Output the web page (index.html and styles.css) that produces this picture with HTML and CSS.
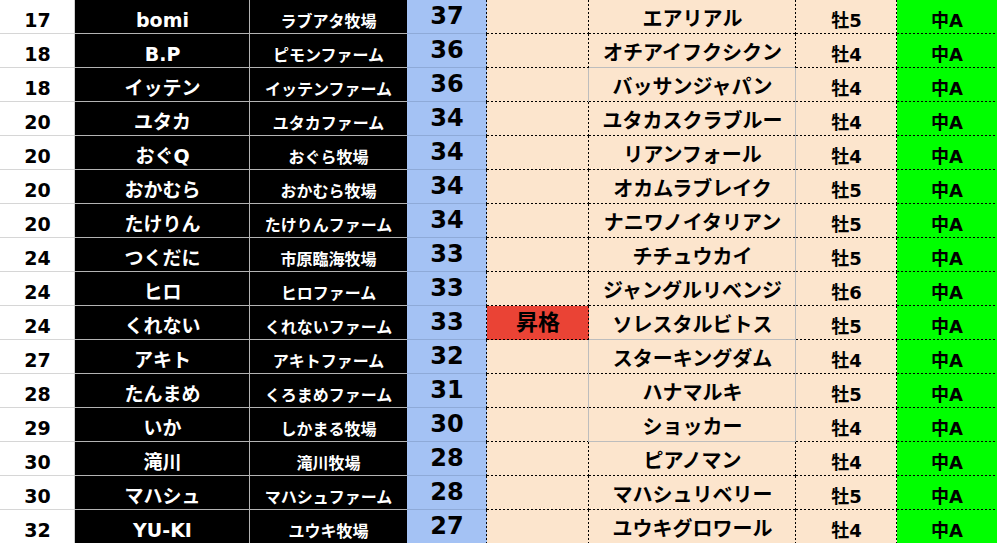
FILE: index.html
```html
<!DOCTYPE html>
<html lang="ja">
<head>
<meta charset="utf-8">
<link rel="stylesheet" href="styles.css">
</head>
<body>
<div class="sheet">
  <div class="row"><div class="c rank">17</div><div class="c name">bomi</div><div class="c farm">ラブアタ牧場</div><div class="c pts">37</div><div class="c note"></div><div class="c horse">エアリアル</div><div class="c sex">牡5</div><div class="c cls">中A</div></div>
  <div class="row"><div class="c rank">18</div><div class="c name">B.P</div><div class="c farm">ピモンファーム</div><div class="c pts">36</div><div class="c note"></div><div class="c horse hb-solid">オチアイフクシクン</div><div class="c sex">牡4</div><div class="c cls">中A</div></div>
  <div class="row"><div class="c rank">18</div><div class="c name">イッテン</div><div class="c farm">イッテンファーム</div><div class="c pts">36</div><div class="c note nr-solid"></div><div class="c horse hr-solid">バッサンジャパン</div><div class="c sex">牡4</div><div class="c cls">中A</div></div>
  <div class="row"><div class="c rank">20</div><div class="c name">ユタカ</div><div class="c farm">ユタカファーム</div><div class="c pts">34</div><div class="c note"></div><div class="c horse hr-solid">ユタカスクラブルー</div><div class="c sex">牡4</div><div class="c cls">中A</div></div>
  <div class="row"><div class="c rank">20</div><div class="c name">おぐQ</div><div class="c farm">おぐら牧場</div><div class="c pts">34</div><div class="c note"></div><div class="c horse hr-solid">リアンフォール</div><div class="c sex">牡4</div><div class="c cls">中A</div></div>
  <div class="row"><div class="c rank">20</div><div class="c name">おかむら</div><div class="c farm">おかむら牧場</div><div class="c pts">34</div><div class="c note"></div><div class="c horse hr-solid">オカムラブレイク</div><div class="c sex">牡5</div><div class="c cls">中A</div></div>
  <div class="row"><div class="c rank">20</div><div class="c name">たけりん</div><div class="c farm">たけりんファーム</div><div class="c pts">34</div><div class="c note"></div><div class="c horse hr-solid">ナニワノイタリアン</div><div class="c sex">牡5</div><div class="c cls">中A</div></div>
  <div class="row"><div class="c rank">24</div><div class="c name">つくだに</div><div class="c farm">市原臨海牧場</div><div class="c pts">33</div><div class="c note"></div><div class="c horse hr-solid">チチュウカイ</div><div class="c sex">牡5</div><div class="c cls">中A</div></div>
  <div class="row"><div class="c rank">24</div><div class="c name">ヒロ</div><div class="c farm">ヒロファーム</div><div class="c pts">33</div><div class="c note"></div><div class="c horse hr-solid">ジャングルリベンジ</div><div class="c sex">牡6</div><div class="c cls">中A</div></div>
  <div class="row"><div class="c rank">24</div><div class="c name">くれない</div><div class="c farm">くれないファーム</div><div class="c pts">33</div><div class="c note promo">昇格</div><div class="c horse hr-solid hb-solid">ソレスタルビトス</div><div class="c sex">牡5</div><div class="c cls">中A</div></div>
  <div class="row"><div class="c rank">27</div><div class="c name">アキト</div><div class="c farm">アキトファーム</div><div class="c pts">32</div><div class="c note nr-solid"></div><div class="c horse hr-solid">スターキングダム</div><div class="c sex">牡4</div><div class="c cls">中A</div></div>
  <div class="row"><div class="c rank">28</div><div class="c name">たんまめ</div><div class="c farm">くろまめファーム</div><div class="c pts">31</div><div class="c note nr-solid"></div><div class="c horse hr-solid">ハナマルキ</div><div class="c sex">牡5</div><div class="c cls">中A</div></div>
  <div class="row"><div class="c rank">29</div><div class="c name">いか</div><div class="c farm">しかまる牧場</div><div class="c pts">30</div><div class="c note nr-solid"></div><div class="c horse hr-solid hb-solid">ショッカー</div><div class="c sex">牡4</div><div class="c cls">中A</div></div>
  <div class="row"><div class="c rank">30</div><div class="c name">滝川</div><div class="c farm">滝川牧場</div><div class="c pts">28</div><div class="c note"></div><div class="c horse">ピアノマン</div><div class="c sex">牡4</div><div class="c cls">中A</div></div>
  <div class="row"><div class="c rank">30</div><div class="c name">マハシュ</div><div class="c farm">マハシュファーム</div><div class="c pts">28</div><div class="c note"></div><div class="c horse">マハシュリベリー</div><div class="c sex">牡5</div><div class="c cls">中A</div></div>
  <div class="row"><div class="c rank">32</div><div class="c name">YU-KI</div><div class="c farm">ユウキ牧場</div><div class="c pts">27</div><div class="c note"></div><div class="c horse">ユウキグロワール</div><div class="c sex">牡4</div><div class="c cls">中A</div></div>
</div>
</body>
</html>
```

FILE: styles.css
```css
html, body {
  margin: 0;
  padding: 0;
  background: #ffffff;
}

.sheet {
  width: 997px;
  height: 543px;
  overflow: hidden;
  font-family: "DejaVu Sans", "Noto Sans CJK JP", sans-serif;
  font-weight: 700;
}

.row {
  display: grid;
  grid-template-columns: 75px 175px 157px 80px 102px 207px 101px 100px;
  height: 34px;
}

.c {
  --dot-h: repeating-linear-gradient(90deg, #000 0 2px, transparent 2px 4px);
  --dot-v: repeating-linear-gradient(180deg, #000 0 2px, transparent 2px 4px);
  --rb: none;
  --bb: none;
  height: 34px;
  text-align: center;
  white-space: nowrap;
  overflow: visible;
  background-image: var(--rb), var(--bb);
  background-repeat: no-repeat;
  background-position: right top, left bottom;
  background-size: 1px 100%, 100% 1px;
}

.rank {
  background-color: #ffffff;
  color: #000;
  font-size: 19px;
  line-height: 41px;
  --rb: linear-gradient(#cfcfcf, #cfcfcf);
  --bb: linear-gradient(#d6d6d6, #d6d6d6);
}

.name {
  background-color: #000;
  color: #fff;
  font-size: 19px;
  line-height: 41px;
  --rb: linear-gradient(#b3b3b3, #b3b3b3);
  --bb: linear-gradient(#b3b3b3, #b3b3b3);
}

.farm {
  background-color: #000;
  color: #fff;
  font-size: 16px;
  line-height: 43px;
  --bb: linear-gradient(#b3b3b3, #b3b3b3);
}

.pts {
  background-color: #a4c2f4;
  color: #000;
  font-size: 24px;
  line-height: 33px;
  --rb: var(--dot-v);
  --bb: linear-gradient(#8eaad8, #8eaad8);
}

.note {
  background-color: #fce5cd;
  --rb: var(--dot-v);
  --bb: var(--dot-h);
}

.note.nr-solid {
  --rb: linear-gradient(#bdbdbd, #bdbdbd);
}

.promo {
  background-color: #ea4335;
  color: #000;
  font-size: 22px;
  line-height: 33px;
}

.horse {
  background-color: #fce5cd;
  color: #000;
  font-size: 20px;
  line-height: 38px;
  --rb: var(--dot-v);
  --bb: var(--dot-h);
}

.horse.hr-solid {
  --rb: linear-gradient(#bdbdbd, #bdbdbd);
}

.horse.hb-solid {
  --bb: linear-gradient(#bdbdbd, #bdbdbd);
}

.sex {
  background-color: #fce5cd;
  color: #000;
  font-size: 18px;
  line-height: 41px;
  --rb: var(--dot-v);
  --bb: var(--dot-h);
}

.cls {
  background-color: #00ff00;
  color: #000;
  font-size: 18px;
  line-height: 41px;
  --bb: var(--dot-h);
}
```
